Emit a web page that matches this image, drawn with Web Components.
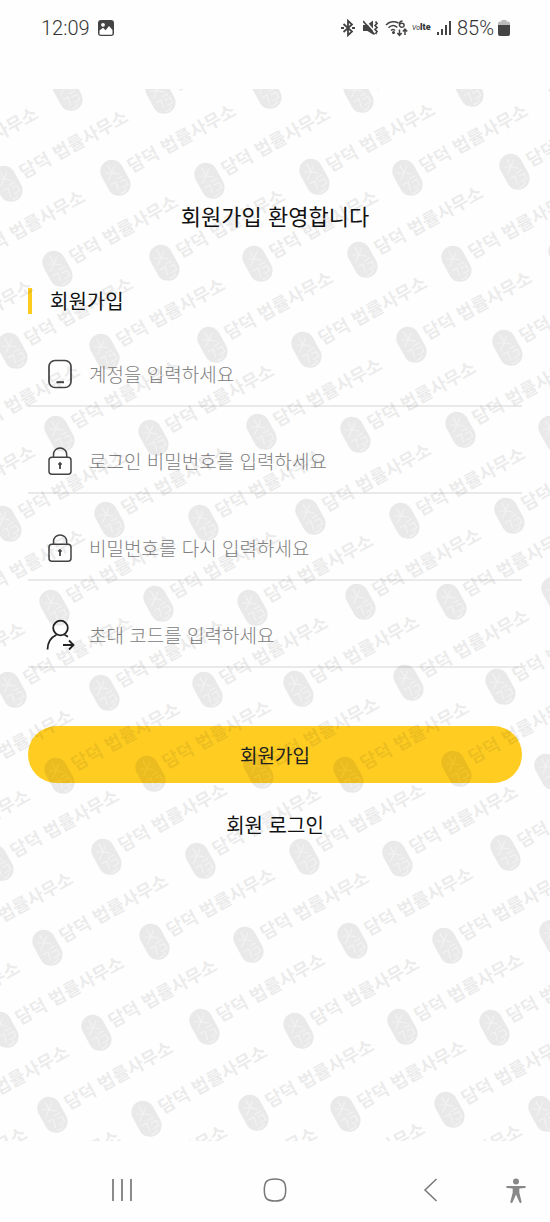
<!DOCTYPE html>
<html lang="ko">
<head>
<meta charset="utf-8">
<meta name="viewport" content="width=device-width, initial-scale=1">
<title>회원가입</title>
<style>
  html, body { margin: 0; }
  body { background: #fefefe; color: #111; font-family: "Noto Sans CJK KR", "Noto Sans", sans-serif; }
</style>
</head>
<body>
<signup-screen></signup-screen>

<template id="t-screen">
  <style>
    :host { display: flex; flex-direction: column; min-height: 100vh; }
    main { flex: 1; position: relative; padding: 110px 28px 0; overflow: hidden; }
    h1 { margin: 0; font-size: 22px; line-height: 32px; font-weight: 400; text-align: center; }
    h2 { margin: 57px 0 6px; padding-left: 18px; border-left: 4px solid #fccb20; font-size: 20px; line-height: 26px; font-weight: 400; }
    form { display: flex; flex-direction: column; }
    .submit { margin-top: 58px; height: 57px; border: 0; border-radius: 29px; background: #ffcd22; color: #222; font: inherit; font-size: 19px; cursor: pointer; }
    .login { display: block; width: max-content; margin: 27px auto 0; font-size: 20px; line-height: 30px; color: #111; text-decoration: none; }
  </style>
  <status-bar></status-bar>
  <main>
    <h1>회원가입 환영합니다</h1>
    <h2>회원가입</h2>
    <form>
      <form-field label="계정을 입력하세요" kind="text">
        <svg width="32" height="32" viewBox="0 0 32 32" fill="none" stroke="#444" stroke-width="1.7"><rect x="5" y="2.500" width="22" height="27" rx="6"/><path d="M12.500 24.200h7.500" stroke-width="2"/></svg>
      </form-field>
      <form-field label="로그인 비밀번호를 입력하세요" kind="password">
        <svg width="32" height="32" viewBox="0 0 32 32" fill="none" stroke="#444" stroke-width="1.5"><rect x="5" y="12.300" width="22" height="17" rx="3"/><path d="M9.500 12V9.500a6.600 6.600 0 0 1 13.200 0V12"/><path d="M16 19v5" stroke-width="1.800"/><circle cx="16" cy="19" r="1.300" fill="#444" stroke-width="1"/></svg>
      </form-field>
      <form-field label="비밀번호를 다시 입력하세요" kind="password">
        <svg width="32" height="32" viewBox="0 0 32 32" fill="none" stroke="#444" stroke-width="1.5"><rect x="5" y="12.300" width="22" height="17" rx="3"/><path d="M9.500 12V9.500a6.600 6.600 0 0 1 13.200 0V12"/><path d="M16 19v5" stroke-width="1.800"/><circle cx="16" cy="19" r="1.300" fill="#444" stroke-width="1"/></svg>
      </form-field>
      <form-field label="초대 코드를 입력하세요" kind="text">
        <svg width="32" height="32" viewBox="0 0 32 32" fill="none" stroke="#222" stroke-width="1.8"><circle cx="16.500" cy="9" r="7.300"/><path d="M3.500 30.500c0-7 3.500-12 9-14.700M20.500 15.800l3.500 2M19 26h9.500M25 21.500l4.500 4.500-4.500 4.500"/></svg>
      </form-field>
      <button class="submit" type="button">회원가입</button>
    </form>
    <a class="login" href="#login">회원 로그인</a>
    <water-mark></water-mark>
  </main>
  <nav-bar></nav-bar>
</template>

<template id="t-field">
  <style>
    :host { display: block; }
    label { display: flex; align-items: center; box-sizing: border-box; height: 87px; padding: 22px 0 0 16px; border-bottom: 2px solid #e9e9e9; }
    span { display: flex; flex: none; width: 45px; }
    input { flex: 1; min-width: 0; height: 40px; padding: 0; border: 0; outline: 0; background: transparent; font: inherit; font-size: 19px; font-weight: 300; color: #222; }
    input::placeholder { color: #808080; opacity: 1; }
  </style>
  <label><span><slot></slot></span><input></label>
</template>

<template id="t-status">
  <style>
    :host { display: flex; align-items: center; gap: 4px; box-sizing: border-box; height: 89px; padding: 0 40px 34px 41px; color: #333; font: 300 20px/24px Roboto, sans-serif; }
    .photo { margin: 0 auto 0 4px; }
    svg { flex: none; }
    .lte { width: 20px; white-space: nowrap; font-size: 9px; line-height: 12px; font-weight: 900; }
    .lte i { font-size: 7px; font-weight: 400; }
  </style>
  <time>12:09</time>
  <svg class="photo" width="16" height="16" viewBox="0 0 16 16"><rect width="16" height="16" rx="3" fill="#444"/><circle cx="5" cy="4.800" r="1.900" fill="#fff"/><path d="M1.500 12.500V10.500L5 7.800l2.600 2.500L11 6l3.500 4v3.500q0 1.200-1.200 1.200H2.700q-1.200 0-1.200-1.200z" fill="#fff"/></svg>
  <svg width="18" height="18" viewBox="0 0 18 18" fill="none" stroke="#444" stroke-width="1.800"><path d="M2.500 5l8.500 7.500-4 3.700V1.800L11 5.500l-8.500 7.500"/><path d="M0 9h3M11 9h3"/></svg>
  <svg width="18" height="18" viewBox="0 0 18 18" fill="#444"><path d="M0 6h4l6-4.500v14L4.500 12H0z"/><path d="M2 1.500 12 13" stroke="#fff" stroke-width="1.500"/><path d="M0 2l11.500 13.500M12.500 2.500l1.500 2-2 2 2 2-2 2 2 2-1.500 2.500" fill="none" stroke="#444" stroke-width="1.700"/></svg>
  <svg width="23" height="18" viewBox="0 0 23 18" fill="none" stroke="#444" stroke-width="1.500"><path d="M1 6c3.500-4 9-4 12.500-2M3.500 8.800c2.700-2.800 6-2.800 8.800-.5M6 11.500c1.200-1.100 2.800-1.100 4 0"/><circle cx="8.500" cy="13.500" r=".8" fill="#444"/><path d="M17.500 2c-4 0-4 6.300-.8 6.300 3.400 0 3-4 .2-4-1.400 0-2.500.8-2.500 2"/><path d="M14.500 10.500v5.500M12.300 14l2.200 2.300 2.200-2.300M20 16v-5.500M17.800 12.500 20 10.200l2.200 2.300"/></svg>
  <span class="lte"><i>Vo</i>lte</span>
  <svg width="17" height="18" viewBox="0 0 17 18" fill="#444"><path d="M1 13h2v3H1zM5 10h2v6H5zM9 6h2v10H9zM13 2h2v14h-2z"/></svg>
  <span>85%</span>
  <svg width="12" height="16" viewBox="0 0 12 16"><path d="M3.500 0h5v1.500H10q2 0 2 2V5H0V3.500q0-2 2-2h1.500z" fill="#bbb"/><path d="M0 5h12v9q0 2-2 2H2q-2 0-2-2z" fill="#444"/></svg>
</template>

<template id="t-nav">
  <style>
    :host { display: block; }
    nav { display: grid; grid-template-columns: 1fr 1fr 1fr 20px; align-items: center; box-sizing: border-box; height: 81px; padding: 16px 24px 0 45px; }
    button { display: flex; justify-content: center; padding: 0; border: 0; background: none; cursor: pointer; }
  </style>
  <nav aria-label="시스템">
    <button aria-label="최근 앱"><svg width="24" height="24" viewBox="0 0 24 24" stroke="#777" stroke-width="1.700"><path d="M3 1v22M12 1v22M21 1v22"/></svg></button>
    <button aria-label="홈"><svg width="24" height="24" viewBox="0 0 24 24" fill="none" stroke="#777" stroke-width="1.500"><path d="M12 1c8 0 10.700 2.700 10.700 11S20 23 12 23 1.300 20.300 1.300 12 4 1 12 1z"/></svg></button>
    <button aria-label="뒤로"><svg width="24" height="24" viewBox="0 0 24 24" fill="none" stroke="#777" stroke-width="1.500"><path d="M19.500 1 8 12l11.500 11"/></svg></button>
    <button aria-label="접근성"><svg width="20" height="28" viewBox="0 0 20 28" fill="#888"><circle cx="10" cy="5.500" r="3"/><path d="M1.200 10h17.600q1 0 1 1t-1 1L13.300 12.600v4l2.200 9q.2 1.200-.8 1.400t-1.300-.8L10 18.500 6.600 26.200q-.4 1-1.400.8t-.8-1.400l2.300-9v-4L1.200 12q-1 0-1-1t1-1z"/></svg></button>
  </nav>
</template>

<template id="t-mark">
  <style>
    :host { display: block; position: absolute; inset: 0; overflow: hidden; pointer-events: none; opacity: 0.08; }
    svg { display: block; width: 100%; height: 100%; }
    text { font: 700 18px "Noto Sans CJK KR", sans-serif; fill: #000; fill-opacity: 0.9; }
  </style>
  <svg aria-hidden="true"></svg>
</template>

<script>
  class Base extends HTMLElement {
    constructor(id) {
      super();
      this.attachShadow({ mode: "open" }).append(document.getElementById(id).content.cloneNode(true));
    }
  }

  customElements.define("status-bar", class extends Base { constructor() { super("t-status"); } });
  customElements.define("nav-bar", class extends Base { constructor() { super("t-nav"); } });

  customElements.define("form-field", class extends Base {
    constructor() { super("t-field"); }
    connectedCallback() {
      const input = this.shadowRoot.querySelector("input");
      input.type = this.getAttribute("kind");
      input.placeholder = this.getAttribute("label");
      input.setAttribute("aria-label", this.getAttribute("label"));
    }
  });

  // Seal centres of the repeated law-office mark, one array per band, as x, y pairs.
  const MARKS = [
    [67,4, 160,7, 266,2, 358,6, 468,0, 560,-1],
    [-83,92, 7,95, 115,89, 209,92, 314,88, 407,89, 514,83],
    [-36,175, 57,180, 164,174, 257,175, 362,171, 456,175, 563,169],
    [-88,265, 12,262, 104,263, 212,256, 306,261, 411,256, 507,259],
    [-41,349, 59,345, 153,349, 261,343, 355,346, 460,341, 553,345],
    [-86,430, 6,435, 109,431, 203,434, 310,428, 404,432, 509,427],
    [-36,514, 54,519, 158,515, 252,519, 360,513, 451,513, 556,506],
    [-96,607, 11,601, 104,604, 207,601, 298,600, 408,594, 500,598],
    [-48,694, 59,687, 150,685, 258,682, 348,686, 456,680, 549,683],
    [-91,774, -2,774, 106,768, 200,772, 304,768, 397,770, 505,764],
    [-48,857, 47,859, 154,853, 248,856, 352,852, 447,857, 554,849],
    [-101,946, 3,941, 96,944, 204,938, 298,942, 402,938, 494,939],
    [-52,1030, 52,1026, 146,1030, 253,1024, 345,1025, 449,1021, 543,1025],
    [-94,1112, -1,1115, 106,1110, 196,1112, 304,1107, 401,1109]
  ];
  const SEAL =
    '<rect x="-11" y="-19" width="23" height="38" rx="11.500"/>' +
    '<path d="M0-15v8M-6-9 0-6l6-5M-7-1l7-5 6 5M-7 4h6l-2 9M1 2h7M2 6h6v6H1M-3 16q5 2 8-2" fill="none" stroke="#fff" stroke-width="1.200" stroke-opacity=".45"/>';

  customElements.define("water-mark", class extends Base {
    constructor() {
      super("t-mark");
      let out = "";
      for (const band of MARKS)
        for (let i = 0; i < band.length; i += 2)
          out += `<g transform="translate(${band[i]} ${band[i + 1]}) rotate(-29)">${SEAL}<text x="17" y="4">담덕 법률사무소</text></g>`;
      this.shadowRoot.querySelector("svg").innerHTML = out;
    }
  });

  customElements.define("signup-screen", class extends Base { constructor() { super("t-screen"); } });
</script>
</body>
</html>
